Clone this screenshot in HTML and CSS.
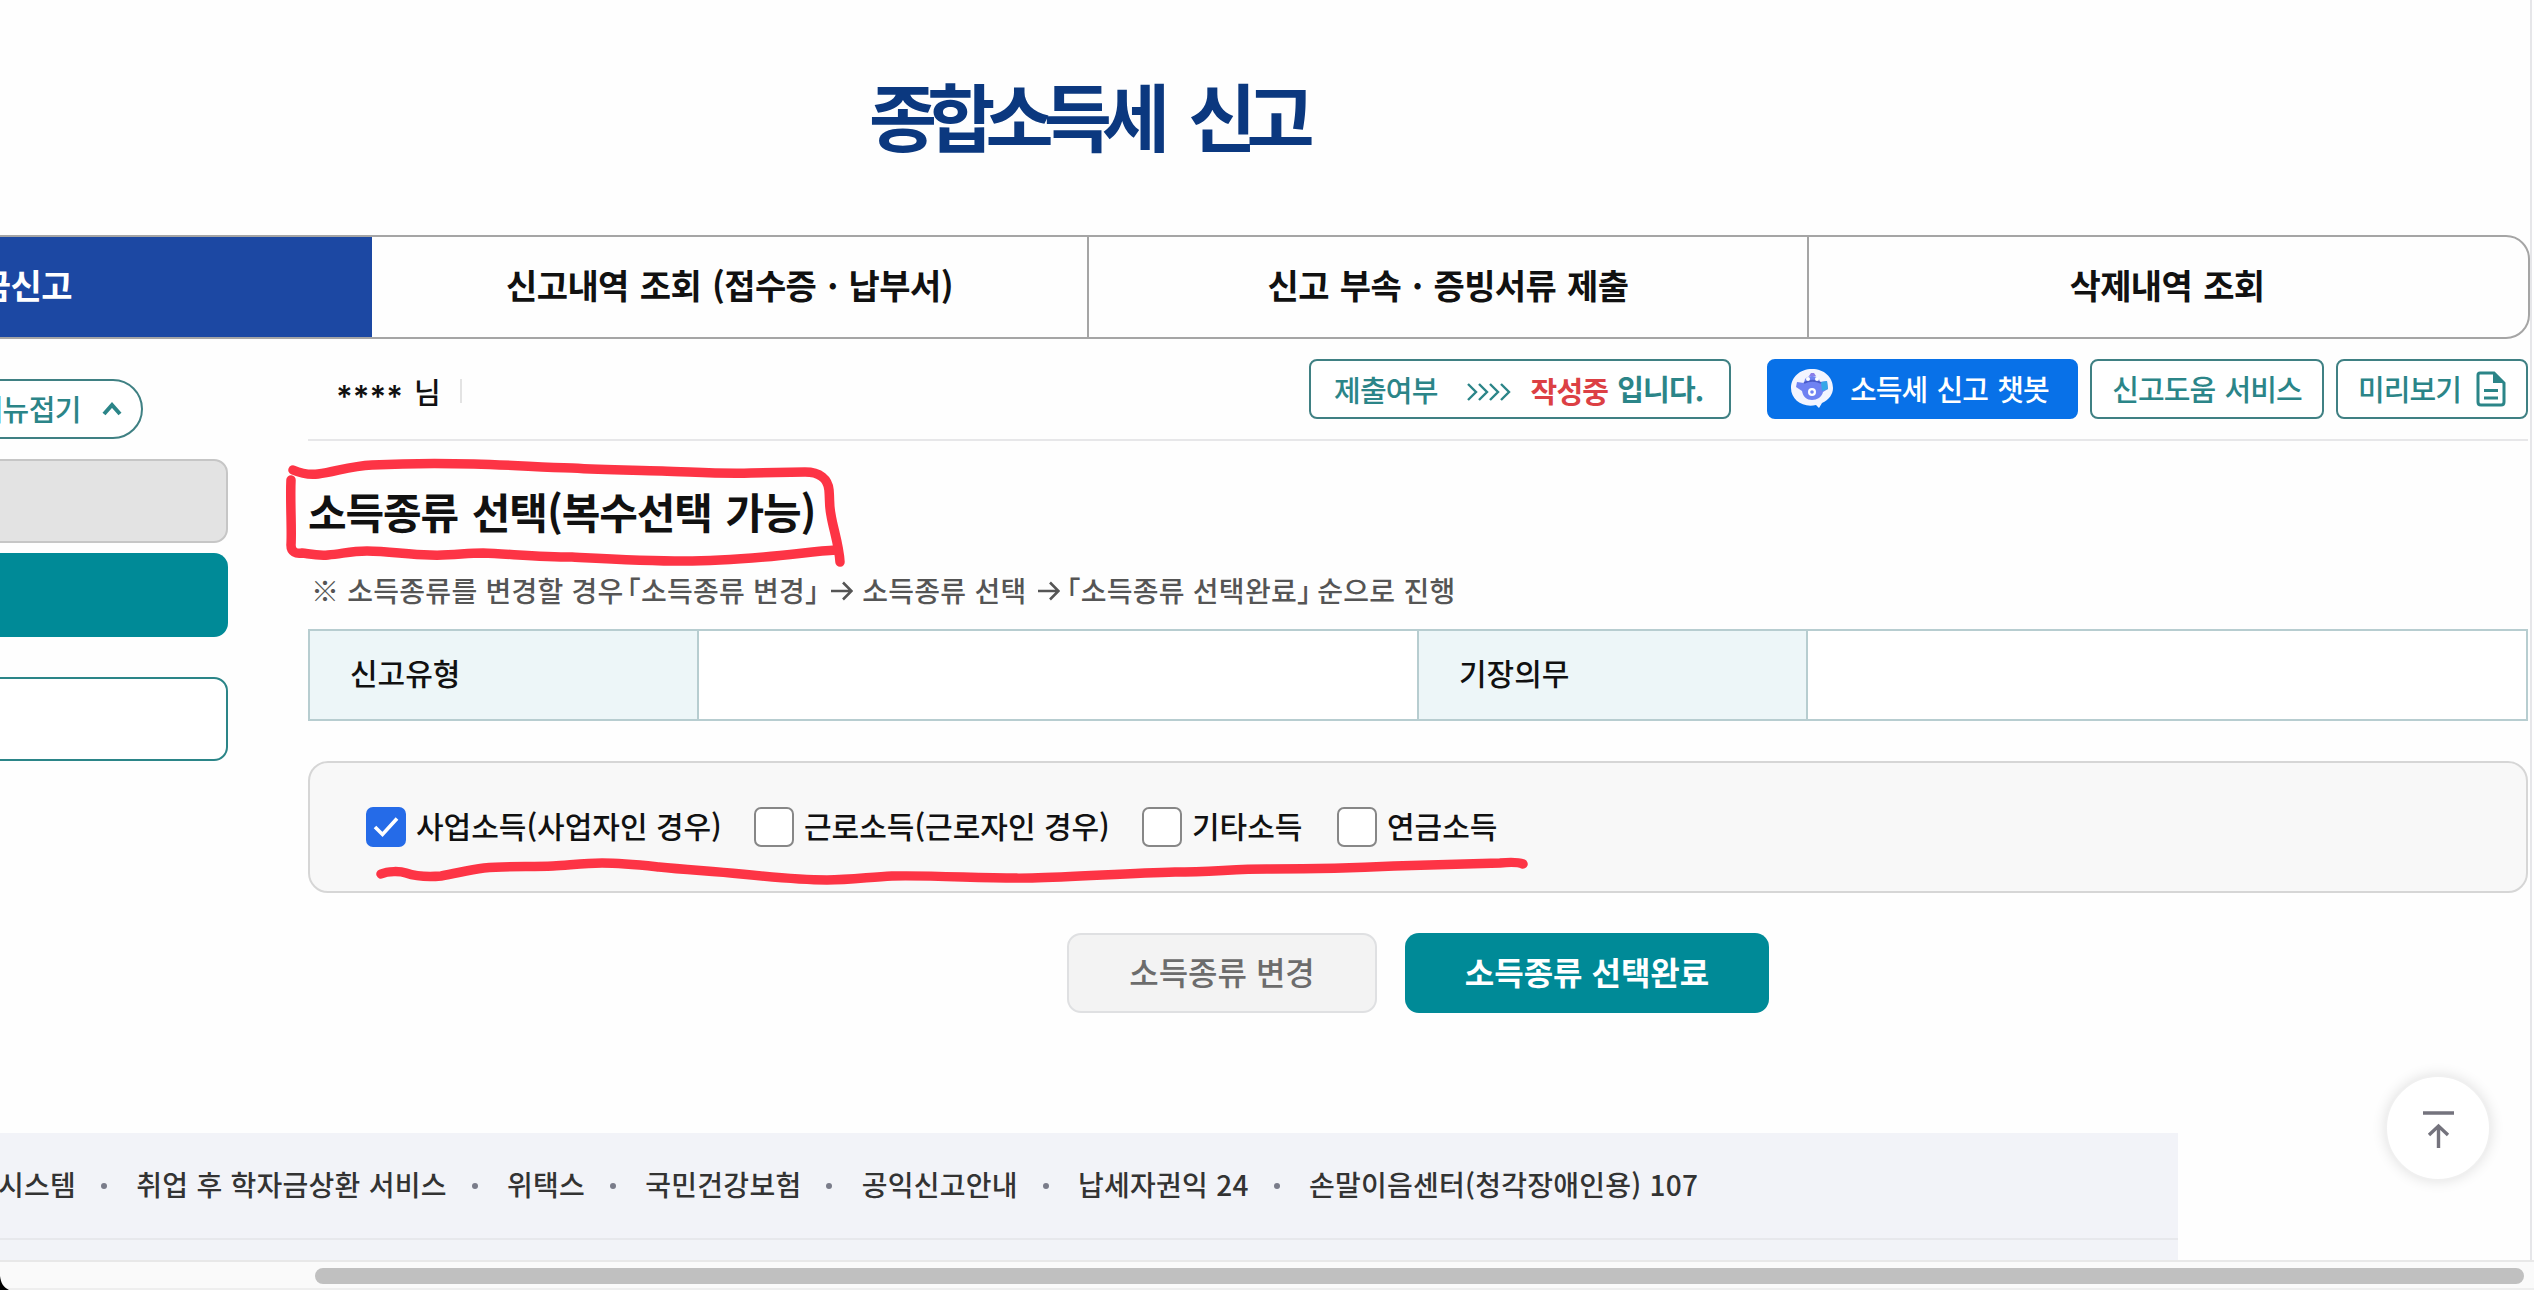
FILE: index.html
```html
<!DOCTYPE html>
<html lang="ko">
<head>
    <meta charset="UTF-8">
    <meta name="viewport" content="width=device-width, initial-scale=1.0">
    <title>종합소득세 신고</title>
    <link rel="stylesheet" href="styles.css">
</head>
<body>
    <div class="page">
        <h1 class="page-title">종합소득세 신고</h1>

        <nav class="tabs">
            <a class="tab active">세금신고</a>
            <a class="tab">신고내역 조회 (접수증 · 납부서)</a>
            <a class="tab">신고 부속 · 증빙서류 제출</a>
            <a class="tab">삭제내역 조회</a>
        </nav>

        <div class="layout">
            <aside class="sidebar">
                <button class="menu-toggle">
                    <span>메뉴접기</span>
                    <svg width="20" height="14" viewBox="0 0 20 14"><path d="M2 12 L10 3 L18 12" fill="none" stroke="#2b8588" stroke-width="4"/></svg>
                </button>
                <div class="side-item side-gray"></div>
                <div class="side-item side-teal"></div>
                <div class="side-item side-white"></div>
            </aside>

            <main class="content">
                <div class="user-bar">
                    <div class="user-name"><span class="stars">****</span><span>님</span></div>
                    <div class="status">
                        <span class="status-label">제출여부</span>
                        <svg class="status-arrows" width="44" height="18" viewBox="0 0 44 18"><path d="M1 1 L9 9 L1 17 M12 1 L20 9 L12 17 M23 1 L31 9 L23 17 M34 1 L42 9 L34 17" fill="none" stroke="#2b8588" stroke-width="2.4"/></svg>
                        <b class="status-red">작성중</b>
                        <b class="status-end">입니다.</b>
                    </div>
                    <button class="top-btn chatbot">
                        <svg width="44" height="40" viewBox="0 0 44 40">
                            <path d="M22 0 C34 0 43 8 43 19 C43 25 39 31 32 34 L29 39 L26 36 C13 39 1 31 1 19 C1 8 10 0 22 0 Z" fill="#f3f5ff"/>
                            <path d="M15 10 C18 6 26 6 29 10 L30 13 L37 12 L38 20 L33 23 C32 28 27 31 22 31 C17 31 13 28 12 22 L6 18 L7 13 L14 14 Z" fill="#6f82f2"/>
                            <path d="M31 13 L37 12 L38 20 L32 22 Z" fill="#35a7e8"/>
                            <path d="M19 7 L21 4 L24 4 L26 7 Z" fill="#8a7ce8"/>
                            <path d="M14 14 C19 11 26 11 31 14" fill="none" stroke="#4a5cc9" stroke-width="2"/>
                            <circle cx="18" cy="10" r="2" fill="#fff"/>
                            <circle cx="27" cy="10" r="2" fill="#fff"/>
                            <circle cx="22" cy="23" r="4" fill="#fff"/>
                            <circle cx="22" cy="23" r="1.8" fill="#6f82f2"/>
                        </svg>
                        <span>소득세 신고 챗봇</span>
                    </button>
                    <button class="top-btn help"><span>신고도움 서비스</span></button>
                    <button class="top-btn preview">
                        <span>미리보기</span>
                        <svg width="30" height="36" viewBox="0 0 30 36">
                            <path d="M4 2 H18 L28 12 V31 Q28 34 25 34 H5 Q2 34 2 31 V4 Q2 2 4 2 Z" fill="none" stroke="#2b8588" stroke-width="3"/>
                            <path d="M17 2 V12 H28 Z" fill="#2b8588"/>
                            <path d="M8 19.5 H22 M8 27 H22" stroke="#2b8588" stroke-width="3"/>
                        </svg>
                    </button>
                </div>

                <h2 class="section-title">소득종류 선택(복수선택 가능)</h2>
                <p class="note">※ 소득종류를 변경할 경우<span class="bracket bracket-open">「</span>소득종류 변경<span class="bracket">」</span><svg class="arrow" width="22" height="20" viewBox="0 0 22 20"><path d="M0 10 H20 M12 1.5 L20.5 10 L12 18.5" fill="none" stroke="#555" stroke-width="2.6"/></svg>소득종류 선택<svg class="arrow" width="22" height="20" viewBox="0 0 22 20"><path d="M0 10 H20 M12 1.5 L20.5 10 L12 18.5" fill="none" stroke="#555" stroke-width="2.6"/></svg><span class="bracket bracket-next">「</span>소득종류 선택완료<span class="bracket bracket-end">」</span> 순으로 진행</p>

                <div class="info-table">
                    <div class="info-label">신고유형</div>
                    <div class="info-value"></div>
                    <div class="info-label">기장의무</div>
                    <div class="info-value"></div>
                </div>

                <div class="check-panel">
                    <label class="check check-business">
                        <span class="box checked"><svg width="26" height="22" viewBox="0 0 26 22"><path d="M2 11 L9.5 18.5 L24 2.5" fill="none" stroke="#fff" stroke-width="3.6"/></svg></span>
                        <span class="check-text">사업소득(사업자인 경우)</span>
                    </label>
                    <label class="check check-work"><span class="box"></span><span class="check-text">근로소득(근로자인 경우)</span></label>
                    <label class="check check-etc"><span class="box"></span><span class="check-text">기타소득</span></label>
                    <label class="check"><span class="box"></span><span class="check-text">연금소득</span></label>
                </div>

                <div class="actions">
                    <button class="action action-change">소득종류 변경</button>
                    <button class="action action-done">소득종류 선택완료</button>
                </div>
            </main>
        </div>

        <footer class="footer">
            <div class="footer-links">
                <a>시스템</a><i></i>
                <a>취업 후 학자금상환 서비스</a><i></i>
                <a>위택스</a><i></i>
                <a>국민건강보험</a><i></i>
                <a>공익신고안내</a><i></i>
                <a>납세자권익 24</a><i></i>
                <a>손말이음센터(청각장애인용) 107</a>
            </div>
        </footer>
    </div>

    <div class="scrollbar"><div class="thumb"></div></div>
    <svg class="corner" width="10" height="14" viewBox="0 0 10 14"><path d="M0 0 C1 7 3 11 9 14 H0 Z" fill="#000"/></svg>

    <button class="to-top">
        <svg width="32" height="38" viewBox="0 0 32 38"><path d="M0 2 H31 M15.5 37 V15 M6 24 L15.5 15 L25 24" fill="none" stroke="#74737d" stroke-width="3.4"/></svg>
    </button>

    <!-- 빨간 펜 표시 -->
    <svg class="pen" width="2534" height="1290" viewBox="0 0 2534 1290">
        <path d="M293 470 C300 473 310 475 318 474 C335 472 350 466 372 465 C410 463 440 463 474 464 C510 465 540 467 572 468 C605 470 632 470 662 471 C695 472 720 474 751 473 L805 472 C820 472 828 479 829 490 C830 502 829 505 831 515 C833 528 839 545 840 562"/>
        <path d="M291 480 C290 500 292 530 291 545 C291 552 296 554 302 553 C310 554 318 556 328 555 C342 554 350 551 367 551 C390 551 408 555 430 555 C450 556 465 553 483 553 C510 554 540 557 572 557 C610 559 645 561 684 561 C715 561 740 559 764 557 C792 555 815 551 836 550"/>
        <path d="M381 874 C388 871 400 871 406 873 C418 877 430 877 441 876 C458 873 468 870 484 868 C508 866 530 867 553 866 C570 865 585 863 602 863 C622 863 640 865 659 867 C688 870 712 871 741 874 C770 877 798 880 827 880 C850 880 870 877 892 876 C940 875 985 879 1032 878 C1078 877 1128 873 1175 872 C1210 872 1235 869 1267 869 C1310 869 1355 868 1394 866 C1435 865 1475 864 1500 863 C1510 862 1518 862 1523 864"/>
    </svg>
</body>
</html>
```

FILE: styles.css
```css
* {
    box-sizing: border-box;
}
body {
    margin: 0;
    width: 2534px;
    height: 1290px;
    overflow: hidden;
    background-color: #fefefe;
    color: #111;
    font-family: "Noto Sans CJK KR", sans-serif;
    font-size: 29px;
    font-weight: 500;
}
button {
    margin: 0;
    padding: 0;
    font: inherit;
    letter-spacing: inherit;
    word-spacing: inherit;
    white-space: nowrap;
}
svg {
    display: block;
    flex: none;
}
.page {
    width: 2532px;
    height: 1260px;
    border-right: 2px solid #e6e6e9;
    overflow: hidden;
    display: flex;
    flex-direction: column;
}
.page-title {
    flex: none;
    height: 235px;
    margin: 0;
    padding-left: 869px;
    line-height: 228px;
    font-size: 74px;
    font-weight: 700;
    letter-spacing: -9.8px;
    word-spacing: 17px;
    color: #0b387f;
    white-space: nowrap;
}

/* tabs */
.tabs {
    flex: none;
    display: grid;
    grid-template-columns: 718px 717px 720px 719px;
    width: 2878px;
    height: 104px;
    margin-left: -348px;
    border: 2px solid #a5a5a5;
    border-radius: 24px;
    overflow: hidden;
}
.tab {
    display: flex;
    align-items: center;
    justify-content: center;
    padding-bottom: 5px;
    border-right: 2px solid #a5a5a5;
    font-size: 34px;
    font-weight: 700;
    letter-spacing: -0.6px;
    word-spacing: 2px;
    white-space: nowrap;
}
.tab:last-child {
    border-right: none;
    padding-right: 3px;
}
.tab.active {
    padding-right: 3px;
    background-color: #1c48a3;
    border-color: #1c48a3;
    color: white;
}

/* sidebar */
.layout {
    flex: none;
    display: flex;
    gap: 80px;
    height: 794px;
}
.sidebar {
    width: 228px;
    padding-top: 40px;
}
.menu-toggle {
    display: flex;
    align-items: center;
    justify-content: flex-end;
    gap: 21px;
    width: 203px;
    height: 60px;
    margin-left: -60px;
    padding-right: 19px;
    border: 2px solid #3f8083;
    border-radius: 30px;
    background-color: white;
    color: #2b8588;
    letter-spacing: -0.5px;
}
.menu-toggle span,
.top-btn span {
    padding-bottom: 3px;
}
.side-item {
    height: 84px;
    margin-left: -30px;
    border-radius: 14px;
}
.side-gray {
    margin-top: 20px;
    background-color: #e3e3e3;
    border: 2px solid #c6c6c6;
}
.side-teal {
    margin-top: 10px;
    background-color: #008a97;
}
.side-white {
    margin-top: 40px;
    background-color: white;
    border: 2px solid #2b8588;
}

/* content */
.content {
    width: 2220px;
}
.user-bar {
    display: flex;
    height: 102px;
    padding-top: 20px;
    border-bottom: 2px solid #e7e7e9;
}
.user-name {
    display: flex;
    gap: 11px;
    width: 154px;
    height: 24px;
    margin-top: 20px;
    margin-right: 847px;
    padding-left: 28px;
    border-right: 2px solid #e3e3e3;
    line-height: 25px;
}
.stars {
    font-family: Inter, sans-serif;
    font-weight: 600;
    font-size: 31px;
    line-height: 36px;
}
.status {
    display: flex;
    align-items: center;
    width: 422px;
    height: 60px;
    padding-left: 23px;
    border: 2px solid #3f8083;
    border-radius: 8px;
    background-color: white;
    color: #2b8588;
    letter-spacing: -0.8px;
    white-space: nowrap;
}
.status-arrows {
    margin-left: 29px;
    margin-right: 20px;
    margin-top: 6px;
}
.status-red {
    color: #dc4044;
    padding-top: 1px;
}
.status-end {
    margin-left: 9px;
    padding-bottom: 3px;
}
.top-btn {
    display: flex;
    align-items: center;
    height: 60px;
    border: 2px solid #3f8083;
    border-radius: 8px;
    background-color: white;
    color: #2b8588;
    letter-spacing: -0.9px;
    word-spacing: 2px;
}
.chatbot {
    width: 311px;
    margin-left: 36px;
    padding-left: 21px;
    gap: 16px;
    background-color: #0871e8;
    border-color: #0871e8;
    color: white;
}
.help {
    width: 234px;
    margin-left: 12px;
    justify-content: center;
}
.preview {
    width: 192px;
    margin-left: 12px;
    padding-left: 20px;
    gap: 15px;
}
.section-title {
    margin: 42px 0 0;
    font-size: 42px;
    line-height: 56px;
    font-weight: 700;
    letter-spacing: -1.1px;
    word-spacing: 3px;
    white-space: nowrap;
}
.note {
    display: flex;
    align-items: center;
    margin: 29px 0 0 3px;
    height: 44px;
    color: #555;
    font-size: 28px;
    letter-spacing: 0.25px;
    white-space: pre;
}
.bracket {
    font-feature-settings: "halt";
}
.bracket-open {
    margin-left: 3px;
}
.bracket-next {
    margin-left: -3px;
}
.bracket-end {
    margin-right: -2px;
}
.arrow {
    margin: 2px 9px 0 12px;
}
.info-table {
    display: grid;
    grid-template-columns: 391px 720px 389px 1fr;
    height: 92px;
    margin-top: 17px;
    border: 2px solid #b7cdd0;
    border-left: none;
}
.info-label {
    padding-left: 40px;
    line-height: 83px;
    border-right: 2px solid #b7cdd0;
    background-color: #edf6f8;
    font-size: 30px;
}
.info-label:first-child {
    border-left: 2px solid #b7cdd0;
}
.info-value {
    border-right: 2px solid #b7cdd0;
    background-color: white;
}
.info-value:last-child {
    border-right: none;
}
.info-table + .check-panel {
    margin-top: 40px;
}
.check-panel {
    display: flex;
    align-items: center;
    height: 132px;
    padding-left: 56px;
    border: 2px solid #d6d6d6;
    border-radius: 20px;
    background-color: #f8f8f8;
}
.check {
    display: flex;
    align-items: center;
    gap: 10px;
    font-size: 30px;
    white-space: nowrap;
}
.check-text {
    padding-bottom: 4px;
}
.check-business,
.check-work {
    width: 388px;
}
.check-etc {
    width: 195px;
}
.box {
    display: flex;
    align-items: center;
    justify-content: center;
    width: 40px;
    height: 40px;
    border: 2px solid #878787;
    border-radius: 7px;
    background-color: white;
}
.box.checked {
    background-color: #256be8;
    border-color: #256be8;
}
.actions {
    display: flex;
    gap: 28px;
    margin-top: 40px;
    padding-left: 759px;
}
.action {
    height: 80px;
    padding-bottom: 4px;
    border-radius: 14px;
    font-size: 32px;
}
.action-change {
    width: 310px;
    border: 2px solid #dfe0e2;
    background-color: #f3f3f3;
    color: #6c6c6c;
}
.action-done {
    width: 364px;
    border: none;
    background-color: #008a97;
    color: white;
    font-weight: 700;
}

/* footer */
.footer {
    flex: none;
    width: 2178px;
    height: 127px;
    background-color: #f2f3f8;
}
.footer-links {
    display: flex;
    align-items: center;
    height: 107px;
    margin-left: -2px;
    border-bottom: 2px solid #e7e8ec;
    color: #333;
    font-size: 28px;
    letter-spacing: 0.25px;
    white-space: nowrap;
}
.footer-links a {
    padding-bottom: 4px;
}
.footer-links i {
    width: 6px;
    height: 6px;
    margin: 0 29.3px 0 25px;
    border-radius: 50%;
    background-color: #7a7c8a;
}
.scrollbar {
    height: 30px;
    padding: 6px 10px 0 315px;
    border-top: 2px solid #e8e8e8;
    border-bottom: 2px solid #eee;
    background-color: #fafafa;
}
.thumb {
    height: 16px;
    border-radius: 8px;
    background-color: #c0c0c0;
}
.corner {
    position: absolute;
    left: 0;
    top: 1276px;
}
.to-top {
    position: absolute;
    left: 2385px;
    top: 1075px;
    display: flex;
    align-items: center;
    justify-content: center;
    width: 106px;
    height: 106px;
    padding-left: 2px;
    padding-top: 4px;
    border: 2px solid #f0f0f0;
    border-radius: 50%;
    background-color: white;
    box-shadow: 0 0 14px rgba(0, 0, 0, 0.12);
}
.pen {
    position: absolute;
    left: 0;
    top: 0;
    pointer-events: none;
}
.pen path {
    fill: none;
    stroke: #fd3445;
    stroke-width: 9.5px;
    stroke-linecap: round;
    stroke-linejoin: round;
}
```
